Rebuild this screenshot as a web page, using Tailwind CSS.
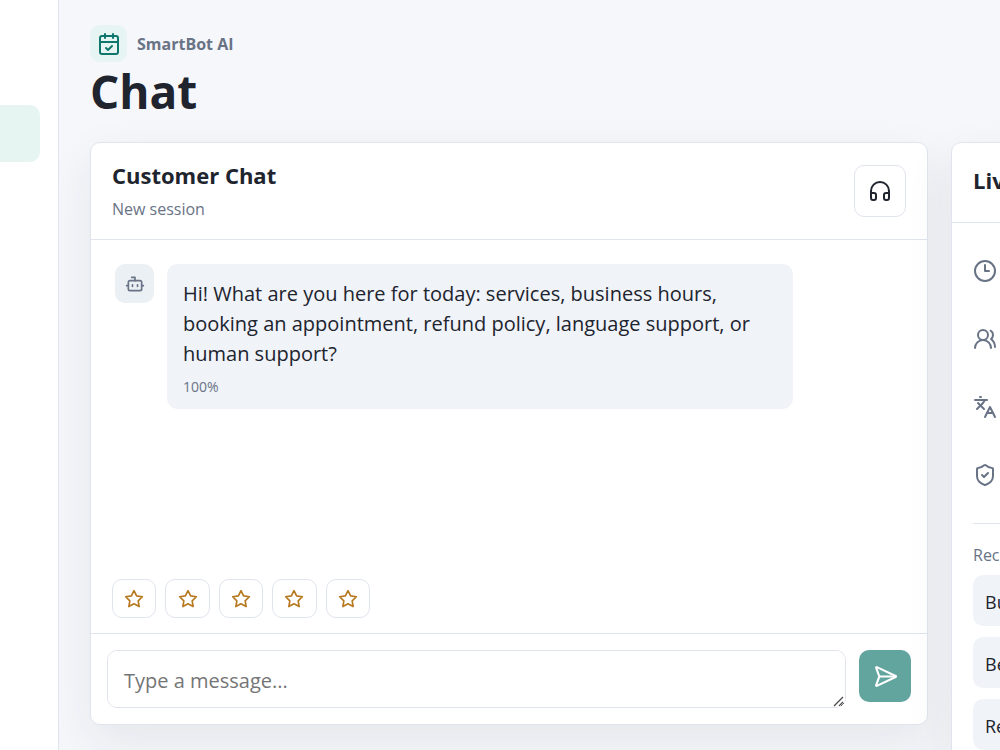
<!DOCTYPE html>
<html lang="en">
<head>
    <meta charset="UTF-8">
    <meta name="viewport" content="width=device-width, initial-scale=1.0">
    <title>SmartBot AI - Chat</title>
    <script src="https://cdn.jsdelivr.net/npm/@tailwindcss/browser@4"></script>
</head>
<body class="bg-[#f6f7fb] text-[#20242e] font-['Open_Sans','Noto_Sans',sans-serif] overflow-hidden">
    <div class="flex min-h-screen">
        <!-- Sidebar -->
        <nav aria-label="Main" class="w-[59px] shrink-0 bg-white border-r border-[#dfe4ee] pt-[105px] pr-[18px]">
            <a href="#chat" aria-label="Chat" class="block h-[57px] rounded-r-[10px] bg-[#e6f5f1]"></a>
        </nav>

        <main class="flex-1 min-w-0 pl-[31px] pt-[25px] overflow-hidden">
            <header>
                <div class="flex items-center gap-[10px]">
                    <span class="flex items-center justify-center size-[37px] rounded-[10px] bg-[#e6f5f1] text-[#0f766e]">
                        <svg class="size-6" viewBox="0 0 24 24" fill="none" stroke="currentColor" stroke-width="2" stroke-linecap="round" stroke-linejoin="round"><path d="M8 2v4"/><path d="M16 2v4"/><rect width="18" height="18" x="3" y="4" rx="2"/><path d="M3 10h18"/><path d="m9 16 2 2 4-4"/></svg>
                    </span>
                    <span class="text-base font-bold text-[#697386]">SmartBot AI</span>
                </div>
                <h1 class="text-[46px] leading-[58px] font-bold">Chat</h1>
            </header>

            <div class="mt-[22px] flex items-start gap-[23px]">
                <!-- Chat panel -->
                <section class="flex-1 min-w-0 bg-white border border-[#dfe4ee] rounded-[10px] shadow-[0_18px_50px_rgba(32,36,46,0.08)]">
                    <div class="flex items-center justify-between px-[21px] h-[97px] border-b border-[#dfe4ee]">
                        <div>
                            <h2 class="text-[22px] leading-7 font-bold">Customer Chat</h2>
                            <p class="mt-2 text-base leading-6 text-[#697386]">New session</p>
                        </div>
                        <button type="button" aria-label="Human support" class="flex items-center justify-center size-[52px] rounded-[10px] bg-white border border-[#dfe4ee]">
                            <svg class="size-6" viewBox="0 0 24 24" fill="none" stroke="currentColor" stroke-width="2" stroke-linecap="round" stroke-linejoin="round"><path d="M3 14h3a2 2 0 0 1 2 2v3a2 2 0 0 1-2 2H5a2 2 0 0 1-2-2v-7a9 9 0 0 1 18 0v7a2 2 0 0 1-2 2h-1a2 2 0 0 1-2-2v-3a2 2 0 0 1 2-2h3"/></svg>
                        </button>
                    </div>

                    <div class="flex items-start gap-[13px] px-6 py-6 min-h-[339px]">
                        <span class="flex items-center justify-center size-[39px] shrink-0 rounded-[10px] bg-[#ebf0f5] text-[#697386]">
                            <svg class="size-5" viewBox="0 0 24 24" fill="none" stroke="currentColor" stroke-width="2" stroke-linecap="round" stroke-linejoin="round"><path d="M12 8V4H8"/><rect width="16" height="12" x="4" y="8" rx="2"/><path d="M2 14h2"/><path d="M20 14h2"/><path d="M15 13v2"/><path d="M9 13v2"/></svg>
                        </span>
                        <div class="w-[626px] px-4 pt-[15px] pb-3 rounded-[10px] bg-[#f0f3f8]">
                            <p class="text-xl leading-[30px]">Hi! What are you here for today: services, business hours, booking an appointment, refund policy, language support, or human support?</p>
                            <p class="mt-2 text-sm leading-5 text-[#697386]">100%</p>
                        </div>
                    </div>

                    <div class="grid grid-cols-5 gap-[9px] w-[258px] ml-[21px] mb-[15px]">
                        <button type="button" aria-label="1 star" class="flex items-center justify-center h-[39px] rounded-[10px] border border-[#dfe4ee] text-[#b7791f]">
                            <svg class="size-5" viewBox="0 0 24 24" fill="none" stroke="currentColor" stroke-width="2" stroke-linejoin="round"><path d="m12 2 3.09 6.26L22 9.27l-5 4.87 1.18 6.88L12 17.77l-6.18 3.25L7 14.14 2 9.27l6.91-1.01z"/></svg>
                        </button>
                        <button type="button" aria-label="2 stars" class="flex items-center justify-center h-[39px] rounded-[10px] border border-[#dfe4ee] text-[#b7791f]">
                            <svg class="size-5" viewBox="0 0 24 24" fill="none" stroke="currentColor" stroke-width="2" stroke-linejoin="round"><path d="m12 2 3.09 6.26L22 9.27l-5 4.87 1.18 6.88L12 17.77l-6.18 3.25L7 14.14 2 9.27l6.91-1.01z"/></svg>
                        </button>
                        <button type="button" aria-label="3 stars" class="flex items-center justify-center h-[39px] rounded-[10px] border border-[#dfe4ee] text-[#b7791f]">
                            <svg class="size-5" viewBox="0 0 24 24" fill="none" stroke="currentColor" stroke-width="2" stroke-linejoin="round"><path d="m12 2 3.09 6.26L22 9.27l-5 4.87 1.18 6.88L12 17.77l-6.18 3.25L7 14.14 2 9.27l6.91-1.01z"/></svg>
                        </button>
                        <button type="button" aria-label="4 stars" class="flex items-center justify-center h-[39px] rounded-[10px] border border-[#dfe4ee] text-[#b7791f]">
                            <svg class="size-5" viewBox="0 0 24 24" fill="none" stroke="currentColor" stroke-width="2" stroke-linejoin="round"><path d="m12 2 3.09 6.26L22 9.27l-5 4.87 1.18 6.88L12 17.77l-6.18 3.25L7 14.14 2 9.27l6.91-1.01z"/></svg>
                        </button>
                        <button type="button" aria-label="5 stars" class="flex items-center justify-center h-[39px] rounded-[10px] border border-[#dfe4ee] text-[#b7791f]">
                            <svg class="size-5" viewBox="0 0 24 24" fill="none" stroke="currentColor" stroke-width="2" stroke-linejoin="round"><path d="m12 2 3.09 6.26L22 9.27l-5 4.87 1.18 6.88L12 17.77l-6.18 3.25L7 14.14 2 9.27l6.91-1.01z"/></svg>
                        </button>
                    </div>

                    <form class="flex items-start gap-[13px] p-4 border-t border-[#dfe4ee]">
                        <div class="relative flex-1 min-w-0">
                            <textarea id="message" aria-label="Message" rows="1" placeholder="Type a message..." class="block w-full h-[58px] px-4 py-[15px] text-xl leading-[30px] bg-white border border-[#dfe4ee] rounded-[10px] resize-y placeholder:text-[#757575]"></textarea>
                            <!-- resize grip -->
                            <svg class="absolute right-px bottom-px size-3 bg-white rounded-br-[9px] pointer-events-none" viewBox="0 0 12 12" fill="none" stroke="#4b4b4b" stroke-width="1.3"><path d="M1 11 10 2"/><path d="M6 11 10 7"/></svg>
                        </div>
                        <button type="submit" aria-label="Send" class="flex items-center justify-center size-[52px] shrink-0 rounded-[10px] bg-[#62a59f] text-white">
                            <svg class="size-[25px]" viewBox="0 0 24 24" fill="none" stroke="currentColor" stroke-width="2" stroke-linecap="round" stroke-linejoin="round"><path d="M3.714 3.048a.498.498 0 0 0-.683.627l2.843 7.627a2 2 0 0 1 0 1.396l-2.842 7.627a.498.498 0 0 0 .682.627l18-8.5a.5.5 0 0 0 0-.904z"/><path d="M6 12h16"/></svg>
                        </button>
                    </form>
                </section>

                <!-- Live panel, runs past the right edge of the window -->
                <aside class="w-[370px] shrink-0 -mr-[321px] bg-white border border-[#dfe4ee] rounded-[10px] shadow-[0_18px_50px_rgba(32,36,46,0.08)]">
                    <div class="px-[21px] pt-[22px] pb-[27px] border-b border-[#dfe4ee]">
                        <h2 class="text-[22px] leading-[30px] font-bold">Live</h2>
                    </div>
                    <div class="px-[21px] pt-9 pb-6">
                        <ul class="flex flex-col gap-11 pb-9 border-b border-[#dfe4ee] text-[#697386]">
                            <li><svg class="size-6" viewBox="0 0 24 24" fill="none" stroke="currentColor" stroke-width="2" stroke-linecap="round" stroke-linejoin="round"><circle cx="12" cy="12" r="10"/><path d="M12 6v6h4"/></svg></li>
                            <li><svg class="size-6" viewBox="0 0 24 24" fill="none" stroke="currentColor" stroke-width="2" stroke-linecap="round" stroke-linejoin="round"><path d="M18 21a8 8 0 0 0-16 0"/><circle cx="10" cy="8" r="5"/><path d="M22 20c0-3.37-2-6.5-4-8a5 5 0 0 0-.45-8.3"/></svg></li>
                            <li><svg class="size-6" viewBox="0 0 24 24" fill="none" stroke="currentColor" stroke-width="2" stroke-linecap="round" stroke-linejoin="round"><path d="m5 8 6 6"/><path d="m4 14 6-6 2-3"/><path d="M2 5h12"/><path d="M7 2h1"/><path d="m22 22-5-10-5 10"/><path d="M14 18h6"/></svg></li>
                            <li><svg class="size-6" viewBox="0 0 24 24" fill="none" stroke="currentColor" stroke-width="2" stroke-linecap="round" stroke-linejoin="round"><path d="M20 13c0 5-3.5 7.5-7.66 8.95a1 1 0 0 1-.67-.01C7.5 20.5 4 18 4 13V6a1 1 0 0 1 1-1c2 0 4.5-1.2 6.24-2.72a1.17 1.17 0 0 1 1.52 0C14.51 3.81 17 5 19 5a1 1 0 0 1 1 1z"/><path d="m9 12 2 2 4-4"/></svg></li>
                        </ul>
                        <h3 class="mt-[19px] text-base leading-6 text-[#697386]">Recent</h3>
                        <div class="mt-2 flex flex-col gap-[11px]">
                            <button type="button" class="h-[51px] px-3 pt-[3px] rounded-[10px] bg-[#f0f3f8] text-left text-lg">Business hours</button>
                            <button type="button" class="h-[51px] px-3 pt-[3px] rounded-[10px] bg-[#f0f3f8] text-left text-lg">Best time</button>
                            <button type="button" class="h-[51px] px-3 pt-[3px] rounded-[10px] bg-[#f0f3f8] text-left text-lg">Refund policy</button>
                        </div>
                    </div>
                </aside>
            </div>
        </main>
    </div>
</body>
</html>
